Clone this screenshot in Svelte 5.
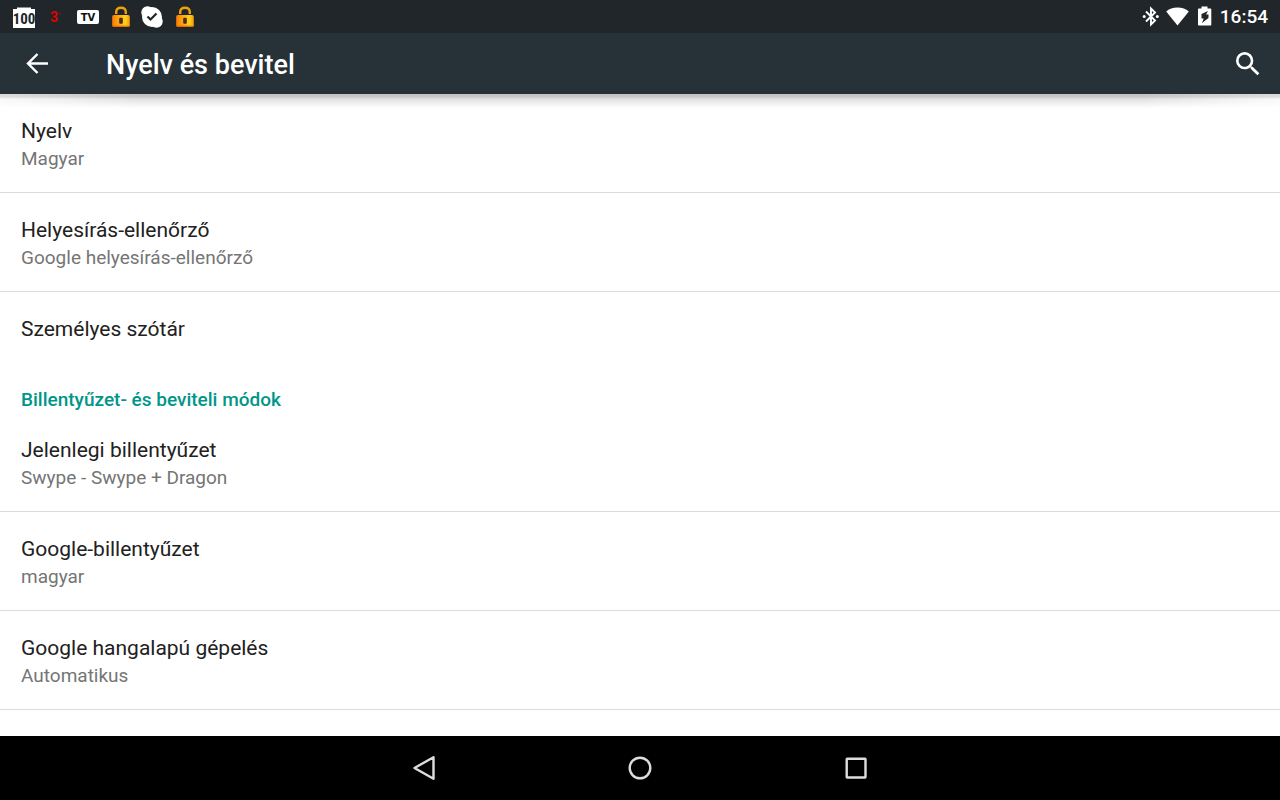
<script lang="ts">
  interface Setting {
    title: string;
    summary?: string;
  }

  interface Section {
    heading?: string;
    items: Setting[];
  }

  let time = "16:54";

  let sections: Section[] = [
    {
      items: [
        { title: "Nyelv", summary: "Magyar" },
        { title: "Helyesírás-ellenőrző", summary: "Google helyesírás-ellenőrző" },
        { title: "Személyes szótár" },
      ]
    },
    {
      heading: "Billentyűzet- és beviteli módok",
      items: [
        { title: "Jelenlegi billentyűzet", summary: "Swype - Swype + Dragon" },
        { title: "Google-billentyűzet", summary: "magyar" },
        { title: "Google hangalapú gépelés", summary: "Automatikus" },
      ]
    }
  ];
</script>

{#snippet lock()}
  <svg class="lock" width="18" height="22" viewBox="0 0 18 22" aria-hidden="true">
    <defs>
      <linearGradient id="lock-body" x1="0" y1="0" x2="1" y2="0">
        <stop offset="0" stop-color="#ff7a0a" />
        <stop offset="0.35" stop-color="#ffa30c" />
        <stop offset="0.75" stop-color="#ffd21c" />
        <stop offset="1" stop-color="#f39a08" />
      </linearGradient>
    </defs>
    <path d="M4.200 8V6.200C4.200 3.400 6.200 1.700 9 1.700s4.800 1.700 4.800 4.500V8" fill="none" stroke="#eda012" stroke-width="2.400" />
    <rect x="0.200" y="9" width="17.600" height="12" rx="1.800" fill="url(#lock-body)" />
    <path d="M0.800 20.300h16.400" stroke="#dc6a08" stroke-width="1.200" />
    <rect x="7.200" y="11.800" width="3.600" height="6" rx="1" fill="#4a2c0c" />
  </svg>
{/snippet}

<div class="screen">
  <div class="status-bar">
    <div class="notifications">
      <svg width="22" height="22" viewBox="0 0 22 22" aria-hidden="true">
        <path d="M0 3h22v19H0z" fill="#fff" />
        <path d="M4 1.500h14" stroke="#8d9194" stroke-width="1" />
        <path d="M4 2.500h14" stroke="#fff" stroke-width="1" />
        <text class="charge" x="11" y="18" text-anchor="middle" font-size="15" font-weight="700" fill="#20262a">100</text>
      </svg>
      <svg width="22" height="22" viewBox="0 0 22 22" aria-hidden="true">
        <text x="5" y="16" font-size="14" font-weight="700" fill="#e00000">3</text>
        <circle cx="15" cy="7.500" r="1" fill="#b00000" />
      </svg>
      <svg width="22" height="22" viewBox="0 0 22 22" aria-hidden="true">
        <rect y="4" width="22" height="14" rx="2" fill="#fff" />
        <text class="tv" x="11" y="15" text-anchor="middle" font-size="10" font-weight="700" fill="#111">TV</text>
      </svg>
      {@render lock()}
      <svg width="22" height="22" viewBox="0 0 22 22" aria-hidden="true">
        <circle cx="11" cy="11" r="10" fill="#fff" />
        <circle cx="6.500" cy="6.500" r="6.200" fill="#fff" />
        <circle cx="15.500" cy="15.500" r="6.200" fill="#fff" />
        <path d="M6.500 10.500l3 3 6-6" fill="none" stroke="#20262a" stroke-width="2.200" />
      </svg>
      {@render lock()}
    </div>
    <div class="system">
      <svg width="18" height="22" viewBox="0 0 18 22" aria-hidden="true">
        <path d="M4 5.500L13 14.500l-4 4V2.500l4 4L4 15.500" fill="none" stroke="#fff" stroke-width="1.900" />
        <circle cx="2.200" cy="10.500" r="1.500" fill="#fff" />
        <circle cx="15.300" cy="10.500" r="1.500" fill="#fff" />
      </svg>
      <svg width="24" height="22" viewBox="0 0 24 22" aria-hidden="true">
        <path d="M11.500 19.500L.2 5.500C3 3 7 1.500 11.500 1.500s8.500 1.500 11.300 4z" fill="#fff" />
      </svg>
      <svg class="battery" width="14" height="22" viewBox="0 0 14 22" aria-hidden="true">
        <path d="M3.500.5h6v2h3a.8.8 0 0 1 .8.8v15.400a.8.8 0 0 1-.8.8H.8a.8.8 0 0 1-.8-.8V3.300A.8.800 0 0 1 .8 2.500h2.700z" fill="#fff" />
        <path d="M10 5L3.500 8v4.500h2.200L4 17l6.500-5V8.500H8z" fill="#20262a" />
      </svg>
      <time>{time}</time>
    </div>
  </div>

  <header class="app-bar">
    <button aria-label="Vissza">
      <svg width="32" height="32" viewBox="0 0 32 32">
        <path d="M27 15.500H7.500M16.500 6L7 15.500l9.500 9.500" fill="none" stroke="#fff" stroke-width="2.400" />
      </svg>
    </button>
    <h1>Nyelv és bevitel</h1>
    <button aria-label="Keresés">
      <svg width="32" height="32" viewBox="0 0 24 24">
        <path d="M15.500 14h-.79l-.28-.27A6.471 6.471 0 0 0 16 9.500 6.500 6.500 0 1 0 9.500 16c1.610 0 3.090-.59 4.230-1.570l.27.280v.79l5 4.990L20.490 19zm-6 0C7.010 14 5 11.990 5 9.500S7.010 5 9.500 5 14 7.010 14 9.500 11.990 14 9.500 14z" fill="#fff" />
      </svg>
    </button>
  </header>

  <main>
    {#each sections as section}
      <section>
        {#if section.heading}
          <h2>{section.heading}</h2>
        {/if}
        <ul>
          {#each section.items as item}
            <li class:single={!item.summary}>
              <button class="setting">
                <span class="title">{item.title}</span>
                {#if item.summary}
                  <span class="summary">{item.summary}</span>
                {/if}
              </button>
            </li>
          {/each}
        </ul>
      </section>
    {/each}
  </main>

  <nav>
    <button aria-label="Vissza">
      <svg width="32" height="32" viewBox="0 0 32 32">
        <path d="M25.500 5.200v21.600L6.500 16z" />
      </svg>
    </button>
    <button aria-label="Kezdőképernyő">
      <svg width="32" height="32" viewBox="0 0 32 32">
        <circle cx="16" cy="16" r="10.300" />
      </svg>
    </button>
    <button aria-label="Áttekintés">
      <svg width="32" height="32" viewBox="0 0 32 32">
        <rect x="6.700" y="6.700" width="18.800" height="18.800" rx="0.500" />
      </svg>
    </button>
  </nav>
</div>

<style>
  :global(body) {
    margin: 0;
    background: #fff;
  }

  .screen {
    display: flex;
    flex-direction: column;
    height: 100vh;
    font-family: Roboto, "Noto Sans", sans-serif;
    color: #212121;
  }

  svg {
    display: block;
    flex: none;
  }

  button {
    padding: 0;
    border: none;
    background: none;
    color: inherit;
    font: inherit;
    cursor: pointer;
  }

  .status-bar {
    display: flex;
    justify-content: space-between;
    align-items: center;
    height: 33px;
    padding: 0 12px 0 13px;
    background: #20262a;
    color: #fff;
  }

  .notifications {
    display: flex;
    align-items: center;
    gap: 10px;
  }

  .lock {
    margin: 0 1px 0 3px;
  }

  .charge {
    font-family: "Liberation Sans Narrow", "Roboto Condensed", Roboto, sans-serif;
  }

  .tv {
    font-family: "DejaVu Sans", sans-serif;
  }

  .system {
    display: flex;
    align-items: center;
    gap: 6px;
  }

  .battery {
    margin: 0 2px;
  }

  time {
    padding-top: 1px;
    font-size: 19px;
    font-weight: 500;
    line-height: 22px;
  }

  .app-bar {
    position: relative;
    z-index: 1;
    display: flex;
    align-items: center;
    height: 61px;
    padding: 0 16px 0 21px;
    background: #263238;
    color: #fff;
  }

  .app-bar::before,
  .app-bar::after {
    content: "";
    position: absolute;
    top: 100%;
    left: 0;
    right: 0;
    pointer-events: none;
  }

  .app-bar::before {
    height: 5px;
    background: linear-gradient(rgba(0, 0, 0, 0.12), rgba(0, 0, 0, 0.1) 60%, rgba(0, 0, 0, 0));
  }

  /* the wide shadow fades out towards both edges of the screen */
  .app-bar::after {
    height: 14px;
    background: linear-gradient(rgba(0, 0, 0, 0.13), rgba(0, 0, 0, 0.11) 40%, rgba(0, 0, 0, 0));
    mask-image: linear-gradient(to right, rgba(0, 0, 0, 0.2), #000 140px, #000 calc(100% - 140px), rgba(0, 0, 0, 0.2));
  }

  h1 {
    flex: 1;
    margin: 0 0 0 53px;
    padding-top: 2px;
    font-size: 27px;
    font-weight: 500;
    line-height: 32px;
  }

  main {
    flex: 1;
    min-height: 0;
    overflow: hidden;
  }

  ul {
    margin: 0;
    padding: 0;
    list-style: none;
  }

  li {
    border-bottom: 1px solid #dcdcdc;
  }

  li.single {
    border-bottom: none;
  }

  .setting {
    display: block;
    width: 100%;
    padding: 23px 21px 19px;
    text-align: left;
  }

  .title,
  .summary {
    display: block;
    line-height: 28px;
  }

  .title {
    font-size: 21px;
  }

  .summary {
    color: #757575;
    font-size: 19px;
  }

  h2 {
    margin: 0;
    padding: 25px 21px 0;
    color: #009688;
    font-size: 19px;
    font-weight: 500;
    line-height: 26px;
  }

  nav {
    display: flex;
    justify-content: center;
    height: 64px;
    background: #000;
  }

  nav button {
    display: flex;
    justify-content: center;
    align-items: center;
    width: 216px;
  }

  nav svg {
    fill: none;
    stroke: #ddd;
    stroke-width: 2.400;
    stroke-linejoin: round;
  }
</style>
